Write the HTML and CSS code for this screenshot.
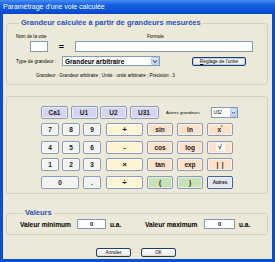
FILE: index.html
```html
<!DOCTYPE html>
<html lang="fr">
<head>
    <meta charset="UTF-8">
    <meta name="viewport" content="width=device-width, initial-scale=1">
    <link rel="stylesheet" href="styles.css">
</head>
<body>

<div class="window">
    <div class="titlebar">Paramétrage d'une voie calculée</div>

    <div class="client">
        <fieldset class="group group-grandeur">
            <legend>Grandeur calculée à partir de grandeurs mesurées</legend>

            <div class="row row-labels">
                <span class="lbl-nom">Nom de la voie</span>
                <span class="lbl-formule">Formule</span>
            </div>

            <div class="row row-formule">
                <input type="text" class="field field-nom">
                <span class="equals">=</span>
                <input type="text" class="field field-formule">
            </div>

            <div class="row row-type">
                <span class="lbl-type">Type de grandeur :</span>
                <div class="combo combo-type">
                    <span class="combo-value">Grandeur arbitraire</span>
                    <span class="combo-arrow">
                        <svg width="7" height="5" viewBox="0 0 7 5"><path d="M1 1 L3.5 3.5 L6 1" fill="none" stroke="#4d6185" stroke-width="1.3"/></svg>
                    </span>
                </div>
                <button class="win-btn btn-unite"><u>R</u>églage de l'unité</button>
            </div>

            <div class="row row-info">Grandeur : Grandeur arbitraire ; Unité : unité arbitraire ; Précision : 3</div>
        </fieldset>

        <fieldset class="group group-keypad">
            <div class="row row-voies">
                <button class="key key-voie key-w27">Ca1</button>
                <button class="key key-voie key-w27">U1</button>
                <button class="key key-voie key-w27">U2</button>
                <button class="key key-voie key-w29">U31</button>
                <span class="lbl-autres">Autres grandeurs</span>
                <div class="combo combo-autres">
                    <span class="combo-value">U32</span>
                    <span class="combo-arrow">
                        <svg width="5" height="4" viewBox="0 0 5 4"><path d="M0.8 0.8 L2.5 2.6 L4.2 0.8" fill="none" stroke="#4d6185" stroke-width="1"/></svg>
                    </span>
                </div>
            </div>

            <div class="keypad">
                <button class="key key-num">7</button>
                <button class="key key-num">8</button>
                <button class="key key-num">9</button>
                <button class="key key-op">+</button>
                <button class="key key-fn">sin</button>
                <button class="key key-fn">ln</button>
                <button class="key key-fn">x<sup>²</sup></button>

                <button class="key key-num">4</button>
                <button class="key key-num">5</button>
                <button class="key key-num">6</button>
                <button class="key key-op">-</button>
                <button class="key key-fn">cos</button>
                <button class="key key-fn">log</button>
                <button class="key key-fn"><span class="sqrt">√</span></button>

                <button class="key key-num">1</button>
                <button class="key key-num">2</button>
                <button class="key key-num">3</button>
                <button class="key key-op">×</button>
                <button class="key key-fn">tan</button>
                <button class="key key-fn">exp</button>
                <button class="key key-fn">|&nbsp;&nbsp;|</button>

                <button class="key key-num key-zero">0</button>
                <button class="key key-num">.</button>
                <button class="key key-op">÷</button>
                <button class="key key-par">(</button>
                <button class="key key-par">)</button>
                <button class="key key-autres">Autres</button>
            </div>
        </fieldset>

        <fieldset class="group group-valeurs">
            <legend>Valeurs</legend>
            <div class="row row-valeurs">
                <span class="lbl-min">Valeur minimum</span>
                <input type="text" class="field field-val" value="0">
                <span class="unit unit-min">u.a.</span>
                <span class="lbl-max">Valeur maximum</span>
                <input type="text" class="field field-val field-max" value="0">
                <span class="unit">u.a.</span>
            </div>
        </fieldset>

        <div class="actions">
            <button class="win-btn btn-action btn-annuler">Annuler</button>
            <button class="win-btn btn-action">OK</button>
        </div>
    </div>
</div>

</body>
</html>
```

FILE: styles.css
```css
* {
    box-sizing: border-box;
}

body {
    margin: 0;
    font-family: "Liberation Sans", Arial, sans-serif;
}

.window {
    width: 275px;
    height: 262px;
    display: flex;
    flex-direction: column;
    background-color: #0a4fd0;
    padding: 0 3px 3px 3px;
}

.titlebar {
    height: 14px;
    margin: 0 -3px;
    padding: 3px 0 0 3px;
    color: white;
    font-size: 7px;
    line-height: 8px;
    background: linear-gradient(#4a8cf0, #1462e4 35%, #0a50d8 80%, #0a47c4);
}

.client {
    flex: 1;
    display: flex;
    flex-direction: column;
    background-color: #ece9d8;
    padding: 5px 4px 0 3px;
}

/* group boxes */
.group {
    margin: 0;
    padding: 0;
    min-inline-size: 0;
    border: 1px solid #d3d0bd;
    border-radius: 3px;
}

.group legend {
    margin-left: 3px;
    padding: 0 2px;
    color: #2a52b8;
    font-size: 7.5px;
    line-height: 8px;
    font-weight: bold;
}

.row {
    display: flex;
    align-items: center;
}

/* first group */
.group-grandeur {
    padding: 6px 0 5px 9px;
}

.row-labels {
    height: 7px;
    font-size: 4.6px;
}

.lbl-nom {
    width: 131px;
}

.row-formule {
    height: 11px;
    margin-top: 1px;
}

.field {
    height: 11px;
    border: 1px solid #7f9db9;
    background: white;
    padding: 0;
    font-family: inherit;
}

.field-nom {
    width: 18px;
    margin-left: 14px;
}

.equals {
    width: 27px;
    text-align: center;
    font-size: 9px;
    font-weight: bold;
}

.field-formule {
    width: 178px;
}

.row-type {
    height: 10px;
    margin-top: 4px;
}

.lbl-type {
    width: 46px;
    font-size: 4.8px;
}

.combo {
    display: flex;
    align-items: center;
    background: white;
    border: 1px solid #7f9db9;
    height: 10px;
}

.combo-type {
    width: 98px;
}

.combo-value {
    flex: 1;
    padding-left: 2px;
    font-size: 6.5px;
    font-weight: bold;
}

.combo-arrow {
    display: flex;
    align-items: center;
    justify-content: center;
    width: 8px;
    height: 8px;
    background: linear-gradient(#e3ebfd, #c4d3f7);
    border: 1px solid #b7c8f3;
    border-radius: 1px;
}

.win-btn {
    padding: 0;
    font-family: inherit;
    color: black;
    background: linear-gradient(#ffffff, #ecebe6 85%, #d6d0c5);
    border: 1px solid #1f3c6e;
    border-radius: 2px;
}

.btn-unite {
    width: 54px;
    height: 9px;
    margin-left: 32px;
    font-size: 4.8px;
    line-height: 7px;
    box-shadow: inset 0 0 0 1px #b9cdf5;
}

.row-info {
    height: 7px;
    margin-top: 6px;
    padding-left: 20px;
    font-size: 4.6px;
}

/* keypad group */
.group-keypad {
    margin-top: 11px;
    padding: 9px 0 4px 34px;
}

.row-voies {
    height: 13px;
    gap: 2.5px;
}

.key {
    height: 13px;
    padding: 0;
    font-family: inherit;
    font-size: 6.5px;
    font-weight: bold;
    color: #1a1a1a;
    border: 1px solid #8b9bbd;
    border-radius: 2px;
    box-shadow: inset 0 0 0 1px rgba(255, 255, 255, 0.55);
}

.key-voie {
    background-color: #d5d5f1;
}

.key-w27 {
    width: 27px;
}

.key-w29 {
    width: 29px;
}

.lbl-autres {
    width: 42px;
    margin-left: 5px;
    font-size: 4.4px;
}

.combo-autres {
    width: 27px;
    height: 11px;
}

.combo-autres .combo-value {
    font-size: 4.6px;
    font-weight: normal;
}

.combo-autres .combo-arrow {
    width: 7px;
    height: 9px;
}

.keypad {
    display: grid;
    grid-template-columns: 18px 18px 20px 38px 27px 27px 26px;
    grid-auto-rows: 13px;
    column-gap: 3px;
    row-gap: 4.5px;
    margin-top: 4px;
}

.key-num {
    width: 18px;
    background-color: #f3f3f1;
}

.key-zero {
    grid-column: span 2;
    width: 38px;
}

.key-op {
    width: 37px;
    background-color: #fff5d2;
    font-size: 8px;
}

.key-fn {
    width: 26px;
    background-color: #fde1c8;
}

.key-fn sup {
    font-size: 4.5px;
    line-height: 0;
}

.sqrt {
    display: inline-block;
    width: 9px;
    height: 8px;
    line-height: 8px;
    background: white;
    font-size: 7px;
}

.key-par {
    width: 26px;
    background-color: #c8e2b6;
}

.key-autres {
    width: 26px;
    font-size: 4.6px;
    background-color: #e0e6f4;
    border-color: #4563a0;
}

/* values group */
.group-valeurs {
    margin-top: 15.5px;
    padding: 2px 0 5px 13px;
}

.row-valeurs {
    height: 10px;
    font-size: 6.6px;
    font-weight: bold;
}

.lbl-min {
    width: 57px;
}

.lbl-max {
    width: 59px;
}

.field-val {
    width: 29px;
    height: 10px;
    text-align: center;
    font-size: 5.5px;
    font-weight: bold;
}

.field-max {
    width: 31px;
}

.unit {
    margin-left: 4px;
}

.unit-min {
    width: 35px;
}

.actions {
    display: flex;
    gap: 10px;
    margin-top: 13px;
    padding-left: 90px;
}

.btn-action {
    width: 35px;
    height: 9px;
    font-size: 4.6px;
    line-height: 7px;
}
```
